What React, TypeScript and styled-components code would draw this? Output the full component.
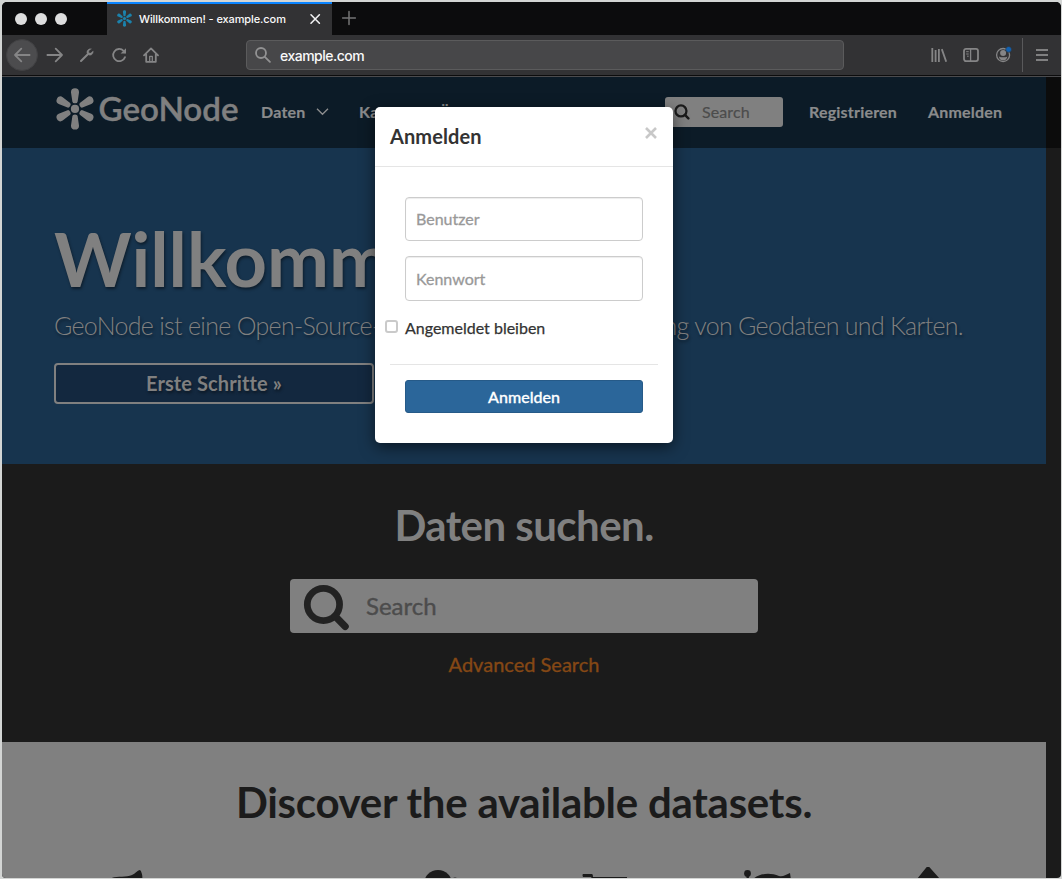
import React from "react";
import styled, { createGlobalStyle } from "styled-components";

const GlobalStyle = createGlobalStyle`
  * { box-sizing: border-box; }
  html, body { margin: 0; padding: 0; background: #d3d5d4; }
  body { width: 1062px; height: 879px; overflow: hidden; font-family: Lato, "Open Sans", sans-serif; }
  input, button { font-family: inherit; margin: 0; }
`;

const Desktop = styled.div`
  width: 1062px;
  height: 879px;
  padding: 2px 1px 1px 2px;
  background: #d3d5d4;
`;
const Window = styled.div`
  position: relative;
  display: flex;
  flex-direction: column;
  height: 876px;
  overflow: hidden;
  border-radius: 5px 5px 4px 4px;
  background: #1b1b1b;
`;

const TabStrip = styled.div`
  display: flex;
  flex: none;
  height: 33px;
  background: #0c0c0d;
`;
const WindowButtons = styled.div`
  display: flex;
  align-items: center;
  gap: 8px;
  width: 105px;
  padding-left: 13px;
`;
const WindowButton = styled.i`
  width: 12px;
  height: 12px;
  border-radius: 50%;
  background: #dedede;
`;
const Tab = styled.div`
  display: flex;
  align-items: center;
  width: 225px;
  padding: 0 11px 2px 9px;
  border-top: 2px solid #0a84ff;
  background: #323234;
  color: #f9f9fa;
  font: 500 11px/16px Inter, sans-serif;
`;
const TabTitle = styled.span`
  flex: 1;
  margin-left: 6px;
  white-space: nowrap;
  letter-spacing: -0.1px;
`;
const NewTab = styled.div`
  display: flex;
  align-items: center;
  padding: 0 0 1px 9px;
`;

const Toolbar = styled.div`
  display: flex;
  flex: none;
  align-items: center;
  height: 40px;
  padding: 0 3px 0 4px;
  background: #323234;
  color: #858586;
`;
const ToolButton = styled.span<{ $round?: boolean }>`
  display: flex;
  flex: none;
  align-items: center;
  justify-content: center;
  width: 32px;
  height: 32px;
  margin-right: ${(p) => (p.$round ? 1 : 0)}px;
  border-radius: 50%;
  border: 1px solid ${(p) => (p.$round ? "#414143" : "transparent")};
  background: ${(p) => (p.$round ? "#4c4c4e" : "transparent")};
`;
const AddressBar = styled.div`
  display: flex;
  align-items: center;
  gap: 9px;
  width: 598px;
  height: 30px;
  margin-left: 79px;
  padding: 0 8px;
  border: 1px solid #5b5b5c;
  border-radius: 4px;
  background: #474749;
  color: #f9f9fa;
  font: 500 14px/20px Inter, sans-serif;
  letter-spacing: -0.5px;
`;
const AddressText = styled.span`
  padding-top: 2px;
`;
const ToolGroup = styled.div`
  display: flex;
  margin-left: auto;
  padding-top: 1px;
`;
const Divider = styled.i`
  width: 1px;
  height: 34px;
  margin: -1px 3px 0;
  background: #59595b;
`;
const ChromeEdge = styled.div`
  flex: none;
  height: 2px;
  border-top: 1px solid #0c0c0d;
  background: #4b4b4d;
`;

const Page = styled.main`
  width: 1044px;
`;
const HeaderRow = styled.div`
  width: 1059px;
  background: #0c0c0c;
`;
const Header = styled.header`
  display: flex;
  align-items: center;
  width: 1044px;
  height: 71px;
  padding: 0 0 2px 53px;
  background: #0c1b27;
  color: #8a8b8c;
`;
const Brand = styled.svg`
  flex: none;
  display: block;
  margin-top: -6px;
`;
const NavItem = styled.a<{ $width: number; $gap?: number }>`
  display: flex;
  align-items: center;
  gap: 11px;
  flex: none;
  width: ${(p) => p.$width}px;
  margin-left: ${(p) => p.$gap ?? 0}px;
  font-size: 16px;
  font-weight: 700;
  line-height: 22px;
  letter-spacing: 0.2px;
  white-space: nowrap;
  -webkit-text-stroke: 0.2px currentColor;
`;
const HeaderSearch = styled.div`
  display: flex;
  align-items: center;
  gap: 12px;
  flex: none;
  width: 118px;
  height: 30px;
  margin-left: auto;
  padding-left: 9px;
  border-radius: 3px;
  background: #808080;
  color: #4c4c4c;
  font-size: 16px;
  letter-spacing: 0.1px;
  -webkit-text-stroke: 0.2px currentColor;
`;

const Hero = styled.section`
  height: 316px;
  padding: 69px 52px 0;
  background: #17344e;
  color: #808080;
  text-shadow: 1px 2px 3px rgba(0, 0, 0, 0.45);
`;
const HeroTitle = styled.h1`
  margin: 0;
  font-size: 74px;
  font-weight: 700;
  line-height: 84px;
`;
const HeroText = styled.p`
  margin: 9px 0 0;
  font-size: 25px;
  font-weight: 300;
  line-height: 30px;
  letter-spacing: -0.7px;
  white-space: nowrap;
`;
const HeroButton = styled.a`
  display: flex;
  align-items: center;
  justify-content: center;
  width: 320px;
  height: 41px;
  margin-top: 23px;
  padding-bottom: 2px;
  border: 2px solid #808080;
  border-radius: 4px;
  background: #13283f;
  font-size: 20px;
  font-weight: 700;
  letter-spacing: 0.1px;
`;

const SearchSection = styled.section`
  display: flex;
  flex-direction: column;
  align-items: center;
  height: 278px;
  padding-top: 36px;
  background: #1b1b1b;
  color: #808080;
`;
const Headline = styled.h2<{ $tracking: number }>`
  margin: 0;
  font-size: 42px;
  font-weight: 700;
  line-height: 50px;
  letter-spacing: ${(p) => p.$tracking}px;
  text-align: center;
  white-space: nowrap;
`;
const SearchField = styled.div`
  display: flex;
  align-items: center;
  gap: 16px;
  width: 468px;
  height: 54px;
  margin-top: 29px;
  padding: 2px 0 0 13px;
  border-radius: 4px;
  background: #808080;
  color: #4c4c4c;
  font-size: 24px;
  -webkit-text-stroke: 0.4px currentColor;
`;
const SearchHint = styled.span`
  padding-bottom: 4px;
`;
const AdvancedLink = styled.a`
  margin-top: 18px;
  color: #854815;
  font-size: 20px;
  line-height: 26px;
  -webkit-text-stroke: 0.35px currentColor;
`;
const DatasetSection = styled.section`
  height: 137px;
  padding-top: 35px;
  background: #808080;
  color: #1b1b1b;
`;
const CategoryRow = styled.div`
  display: grid;
  grid-template-columns: repeat(6, 160px);
  margin: 40px 0 0 45px;
  fill: #1b1b1b;
`;

const Dialog = styled.form`
  position: absolute;
  top: 105px;
  left: 373px;
  width: 298px;
  height: 336px;
  border-radius: 5px;
  background: #fff;
  color: #333;
  box-shadow: 0 4px 15px rgba(0, 0, 0, 0.55);
`;
const DialogHeader = styled.div`
  display: flex;
  justify-content: space-between;
  height: 60px;
  padding: 15px 16px 0 15px;
  border-bottom: 1px solid #e5e5e5;
`;
const DialogTitle = styled.h3`
  margin: 0;
  font-size: 20px;
  font-weight: 700;
  line-height: 28px;
  letter-spacing: 0.1px;
`;
const CloseIcon = styled.svg`
  margin-top: 5px;
`;
const DialogBody = styled.div`
  display: flex;
  flex-direction: column;
  padding: 30px 30px 0;
`;
const Field = styled.input<{ $height: number }>`
  width: 238px;
  height: ${(p) => p.$height}px;
  margin-bottom: 15px;
  padding: 0 10px ${(p) => (p.$height === 44 ? 1 : 0)}px;
  border: 1px solid #ccc;
  border-radius: 4px;
  box-shadow: inset 0 1px 1px rgba(0, 0, 0, 0.075);
  font-size: 16px;
  &::placeholder { color: #999; opacity: 1; -webkit-text-stroke: 0.3px #999; }
`;
const Remember = styled.label`
  display: flex;
  align-items: center;
  gap: 7px;
  margin: 0 0 0 -20px;
  font-size: 16px;
  line-height: 24px;
  -webkit-text-stroke: 0.25px currentColor;
`;
const Checkbox = styled.i`
  width: 13px;
  height: 13px;
  margin-top: -3px;
  border: 2px solid #cacaca;
  border-radius: 3px;
`;
const Rule = styled.hr`
  width: 268px;
  height: 1px;
  margin: 24px 0 15px -15px;
  border: 0;
  background: #e5e5e5;
`;
const Submit = styled.button`
  width: 238px;
  height: 33px;
  padding: 0;
  border: 1px solid #265a88;
  border-radius: 3px;
  background: #2b669a;
  color: #fff;
  font-size: 16px;
  font-weight: 500;
  -webkit-text-stroke: 0.3px currentColor;
`;

type GlassProps = { size: number; color: string };
const Glass = ({ size, color }: GlassProps) => (
  <svg width={size} height={size} viewBox="0 0 46 46" fill="none" stroke={color}>
    <circle cx="20" cy="20" r="15.8" strokeWidth="6.6" />
    <path d="M31.5 31.5 41.3 41.5" strokeWidth="7" strokeLinecap="round" />
  </svg>
);

const Petals = () => (
  <>
    <circle cx="19" cy="20.5" r="4.1" />
    {[0, 60, 120, 180, 240, 300].map((a) => (
      <path
        key={a}
        transform={`rotate(${a} 19 20.5)`}
        d="M16.4 13.4 15 4C14.7 1.4 16.5-.2 19-.2S23.3 1.4 23 4L21.6 13.4Q21.4 14.9 19 14.9T16.4 13.4Z"
      />
    ))}
  </>
);

const App = () => (
  <>
    <GlobalStyle />
    <Desktop>
      <Window>
        <TabStrip>
          <WindowButtons>
            <WindowButton />
            <WindowButton />
            <WindowButton />
          </WindowButtons>
          <Tab>
            <svg width="17" height="17" viewBox="-1 -1 40 43" fill="#1b82ac"><Petals /></svg>
            <TabTitle>Willkommen! - example.com</TabTitle>
            <svg width="12" height="12" viewBox="0 0 12 12" stroke="#f0f0f1" strokeWidth="1.6" strokeLinecap="round"><path d="m2 1.8 8.4 8.4m0-8.4L2 10.2" /></svg>
          </Tab>
          <NewTab>
            <svg width="16" height="16" viewBox="0 0 16 16" stroke="#747475" strokeWidth="1.5" strokeLinecap="round"><path d="M8 1.6v12.8M1.6 8h12.8" /></svg>
          </NewTab>
        </TabStrip>

        <Toolbar>
          <ToolButton $round>
            <svg width="18" height="18" viewBox="0 0 18 18" fill="none" stroke="currentColor" strokeWidth="1.8" strokeLinecap="round" strokeLinejoin="round"><path d="M16.6 9H2m6.3-6.3L2 9l6.3 6.3" /></svg>
          </ToolButton>
          <ToolButton>
            <svg width="18" height="18" viewBox="0 0 18 18" fill="none" stroke="currentColor" strokeWidth="1.8" strokeLinecap="round" strokeLinejoin="round"><path d="M1.4 9H16M9.7 2.7 16 9l-6.3 6.3" /></svg>
          </ToolButton>
          <ToolButton>
            <svg width="16" height="16" viewBox="0 0 16 16" fill="none" stroke="currentColor" strokeLinecap="round"><path d="m2 14 6.8-6.8" strokeWidth="2" /><path d="M12.1 1.8C9.4 1.5 7.4 3.7 8 6.2l1.8 1.9c2.6.7 4.7-1.4 4.4-4.1l-2.4 2.1-1.9-.2-.2-1.9Z" fill="currentColor" strokeWidth=".4" strokeLinejoin="round" /></svg>
          </ToolButton>
          <ToolButton>
            <svg width="16" height="16" viewBox="0 0 16 16" fill="none" stroke="currentColor" strokeWidth="1.8" strokeLinecap="round"><path d="M14 10.1A6.1 6.1 0 1 1 12.6 3.8L14 5.4" /><path d="M15 1.3v5.2H9.6Z" fill="currentColor" stroke="none" /></svg>
          </ToolButton>
          <ToolButton>
            <svg width="16" height="16" viewBox="0 0 16 16" fill="none" stroke="currentColor" strokeWidth="1.8" strokeLinecap="round" strokeLinejoin="round"><path d="M1 8.3 8 1.4l7 6.9M3.2 7.2v7.6h9.6V7.2" /><path d="M6.7 14.5V9.3h2.6v5.2" strokeWidth="1.3" /></svg>
          </ToolButton>
          <AddressBar>
            <svg width="16" height="16" viewBox="0 0 16 16" fill="none" stroke="#929293" strokeWidth="1.8" strokeLinecap="round"><circle cx="6" cy="6" r="5" /><path d="m9.8 9.8 5.1 5.1" /></svg>
            <AddressText>example.com</AddressText>
          </AddressBar>
          <ToolGroup>
            <ToolButton>
              <svg width="16" height="16" viewBox="0 0 16 16" stroke="currentColor" strokeWidth="1.8"><path d="M1.3 1v14M4.6 3v12M7.9 1.9V15M10.8 2.1l4.4 12.6" /></svg>
            </ToolButton>
            <ToolButton>
              <svg width="16" height="16" viewBox="0 0 16 16" fill="none" stroke="currentColor"><rect x="1" y="1.9" width="14" height="12.2" rx="2" strokeWidth="1.8" /><path d="M7.6 2v12" strokeWidth="1.3" /><path d="M3.2 4.7h2.5M3.2 7h2.5M4 9.2h1.7" /></svg>
            </ToolButton>
            <ToolButton>
              <svg width="18" height="18" viewBox="0 0 18 18" fill="none"><circle cx="9.1" cy="9" r="6.5" stroke="currentColor" strokeWidth="1.3" /><circle cx="9.1" cy="7" r="3" fill="currentColor" /><path d="M4.9 10.4c2.2 1.2 6.2 1.2 8.4 0-.4 3-2 3.8-4.2 3.8s-3.8-.8-4.2-3.8Z" fill="currentColor" /><circle cx="14.6" cy="3.4" r="2.9" fill="#1261b0" stroke="#323234" strokeWidth=".6" /></svg>
            </ToolButton>
            <Divider />
            <ToolButton>
              <svg width="14" height="14" viewBox="0 0 14 14" stroke="#9a9a9b" strokeWidth="1.5"><path d="M1 2h12M1 7h12M1 12h12" /></svg>
            </ToolButton>
          </ToolGroup>
        </Toolbar>
        <ChromeEdge />

        <HeaderRow>
          <Header>
            <Brand width="186" height="44" viewBox="0 0 186 44" fill="#808080">
              <g transform="translate(1 1.4)"><Petals /></g>
              <text x="43.5" y="34.2" fontFamily="Lato, sans-serif" fontSize="33" fontWeight="600" textLength="140" lengthAdjust="spacingAndGlyphs" stroke="#808080" strokeWidth=".4">GeoNode</text>
            </Brand>
            <NavItem $width={78} $gap={20}>
              Daten
              <svg width="13" height="9" viewBox="0 0 13 9" fill="none" stroke="#8a8b8c" strokeWidth="1.4"><path d="m1 1.8 5.5 5.4L12 1.8" /></svg>
            </NavItem>
            <NavItem $width={60} $gap={20}>Karten</NavItem>
            <NavItem $width={60} $gap={20}>Über</NavItem>
            <HeaderSearch>
              <Glass size={16} color="#1b1b1b" />
              Search
            </HeaderSearch>
            <NavItem $width={93} $gap={26}>Registrieren</NavItem>
            <NavItem $width={118} $gap={26}>Anmelden</NavItem>
          </Header>
        </HeaderRow>
        <Page>
          <Hero>
            <HeroTitle>Willkommen!</HeroTitle>
            <HeroText>GeoNode ist eine Open-Source-Plattform für die Bereitstellung von Geodaten und Karten.</HeroText>
            <HeroButton>Erste Schritte »</HeroButton>
          </Hero>
          <SearchSection>
            <Headline $tracking={-0.55}>Daten suchen.</Headline>
            <SearchField>
              <Glass size={47} color="#222" />
              <SearchHint>Search</SearchHint>
            </SearchField>
            <AdvancedLink>Advanced Search</AdvancedLink>
          </SearchSection>
          <DatasetSection>
            <Headline $tracking={-0.26}>Discover the available datasets.</Headline>
            <CategoryRow>
              <svg width="160" height="12" viewBox="1 0 160 12"><path d="M62 13c6-5 17-2 24-5 4-2 6-5 8-5 2 2 3 7 2 10Z" /></svg>
              <svg width="160" height="12" />
              <svg width="160" height="12" viewBox="0 0 160 12"><circle cx="71" cy="17" r="14" /><circle cx="88" cy="13.5" r="3" /></svg>
              <svg width="160" height="12" viewBox="1 0 160 12"><path d="M57 7h9q1 0 1 3h34v3H67l-2-3h-8q-1-2 0-3Z" /></svg>
              <svg width="160" height="12" viewBox="0 0 160 12"><circle cx="60.5" cy="6.4" r="3.4" /><path d="M59.5 8h2.4v5h-2.4ZM65 13c7-7 18-8 27-4 4 1 6-1 11-3l1 7Z" /></svg>
              <svg width="160" height="12" viewBox="0 1 160 12"><path d="M70 13 79.5 1.3q1.5-2 3 0L93 13Z" /></svg>
            </CategoryRow>
          </DatasetSection>
        </Page>

        <Dialog>
          <DialogHeader>
            <DialogTitle>Anmelden</DialogTitle>
            <CloseIcon width="12" height="12" viewBox="0 0 12 12" stroke="#c8c8c8" strokeWidth="2.6"><path d="m1 1 10 10M11 1 1 11" /></CloseIcon>
          </DialogHeader>
          <DialogBody>
            <Field $height={44} placeholder="Benutzer" />
            <Field $height={45} placeholder="Kennwort" type="password" />
            <Remember><Checkbox />Angemeldet bleiben</Remember>
            <Rule />
            <Submit type="button">Anmelden</Submit>
          </DialogBody>
        </Dialog>
      </Window>
    </Desktop>
  </>
);

export default App;
